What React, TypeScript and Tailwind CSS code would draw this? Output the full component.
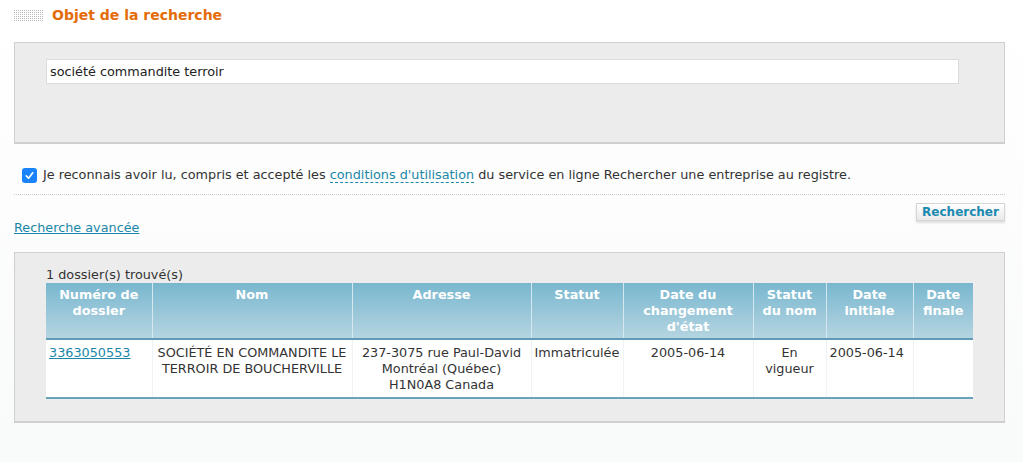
import React from 'react';

const cols = [
  { label: ['Numéro de', 'dossier'], w: 106 },
  { label: ['Nom'], w: 200 },
  { label: ['Adresse'], w: 179 },
  { label: ['Statut'], w: 92 },
  { label: ['Date du', 'changement', "d'état"], w: 130 },
  { label: ['Statut', 'du nom'], w: 73 },
  { label: ['Date', 'initiale'], w: 87 },
  { label: ['Date', 'finale'], w: 60 },
];

const GridIcon = () => (
  <svg width="30" height="11" viewBox="0 0 30 11" className="shrink-0">
    <defs>
      <pattern id="dots" width="2" height="2" patternUnits="userSpaceOnUse">
        <rect width="1" height="1" fill="#b8b8b8" />
      </pattern>
    </defs>
    <rect width="30" height="11" fill="url(#dots)" />
  </svg>
);

export default function App() {
  return (
    <div className="min-h-[462px] bg-gradient-to-b from-white to-[#f9fafa] pl-[14px] pr-[18px] pt-[7px] text-[12.8px] leading-[16px] text-[#333] [font-family:'DejaVu_Sans',Verdana,sans-serif]">
      {/* title */}
      <div className="flex h-[16px] items-center gap-[8px]">
        <GridIcon />
        <h2 className="text-[14px] font-bold text-[#e36c09]">Objet de la recherche</h2>
      </div>

      {/* search box */}
      <div className="mt-[19px] h-[102px] border border-[#cfcfcf] border-b-2 bg-[#ececec] px-[31px] pt-[16px]">
        <div className="flex h-[25px] w-[913px] items-center border border-[#dcdcdc] bg-white px-[3px] text-[#222]">
          société commandite terroir
        </div>
      </div>

      {/* conditions */}
      <div className="mt-[23px] flex h-[16px] items-center gap-[6px] pl-[8px]">
        <span className="flex h-[15px] w-[15px] items-center justify-center rounded-[3px] bg-[#1a82fb]">
          <svg width="11" height="11" viewBox="0 0 12 12">
            <path d="M2.5 6.5 L5 9 L9.5 3" fill="none" stroke="white" strokeWidth="1.8" strokeLinecap="round" strokeLinejoin="round" />
          </svg>
        </span>
        <span>
          Je reconnais avoir lu, compris et accepté les{' '}
          <span className="border-b border-dashed border-[#1a87a8] text-[#1a87a8]">conditions d'utilisation</span>{' '}
          du service en ligne Rechercher une entreprise au registre.
        </span>
      </div>

      <div className="mt-[11px] border-t border-dotted border-[#c8c8c8]" />

      <div className="mt-[8px] flex justify-end">
        <button className="h-[18px] w-[89px] border border-[#d6d6d6] bg-gradient-to-b from-white to-[#e9e9e9] text-[12px] leading-none font-bold text-[#1a8ab0] shadow-[0_2px_2px_rgba(0,0,0,0.12)]">
          Rechercher
        </button>
      </div>

      <div className="-mt-[1px]">
        <a className="text-[#1a87a8] underline">Recherche avancée</a>
      </div>

      {/* results */}
      <div className="mt-[16px] h-[171px] border border-[#cfcfcf] border-b-2 bg-[#ececec] px-[31px] pt-[14px]">
        <div>1 dossier(s) trouvé(s)</div>
        <table className="table-fixed border-collapse">
          <thead>
            <tr className="bg-gradient-to-b from-[#78b7cf] to-[#b6d5e1]">
              {cols.map((c, i) => (
                <th
                  key={i}
                  style={{ width: c.w }}
                  className="h-[56px] border-l border-[#d6e8ef] border-b-2 border-b-[#5f9bb5] px-[2px] pt-[4px] align-top font-bold text-white first:border-l-0"
                >
                  {c.label.map((l) => (
                    <div key={l}>{l}</div>
                  ))}
                </th>
              ))}
            </tr>
          </thead>
          <tbody>
            <tr className="bg-white">
              {[
                <a className="text-[#1a87a8] underline">3363050553</a>,
                <>SOCIÉTÉ EN COMMANDITE LE<br />TERROIR DE BOUCHERVILLE</>,
                <>237-3075 rue Paul-David<br />Montréal (Québec)<br />H1N0A8 Canada</>,
                <>Immatriculée</>,
                <>2005-06-14</>,
                <>En<br />vigueur</>,
                <>2005-06-14</>,
                <></>,
              ].map((content, i) => (
                <td
                  key={i}
                  className={`h-[59px] border-l border-[#eef3f5] border-b-2 border-b-[#6aa2ba] px-[3px] pt-[5px] align-top whitespace-nowrap first:border-l-0 ${i === 0 || i === 3 || i === 6 ? 'text-left' : 'text-center'}`}
                >
                  {content}
                </td>
              ))}
            </tr>
          </tbody>
        </table>
      </div>
    </div>
  );
}
